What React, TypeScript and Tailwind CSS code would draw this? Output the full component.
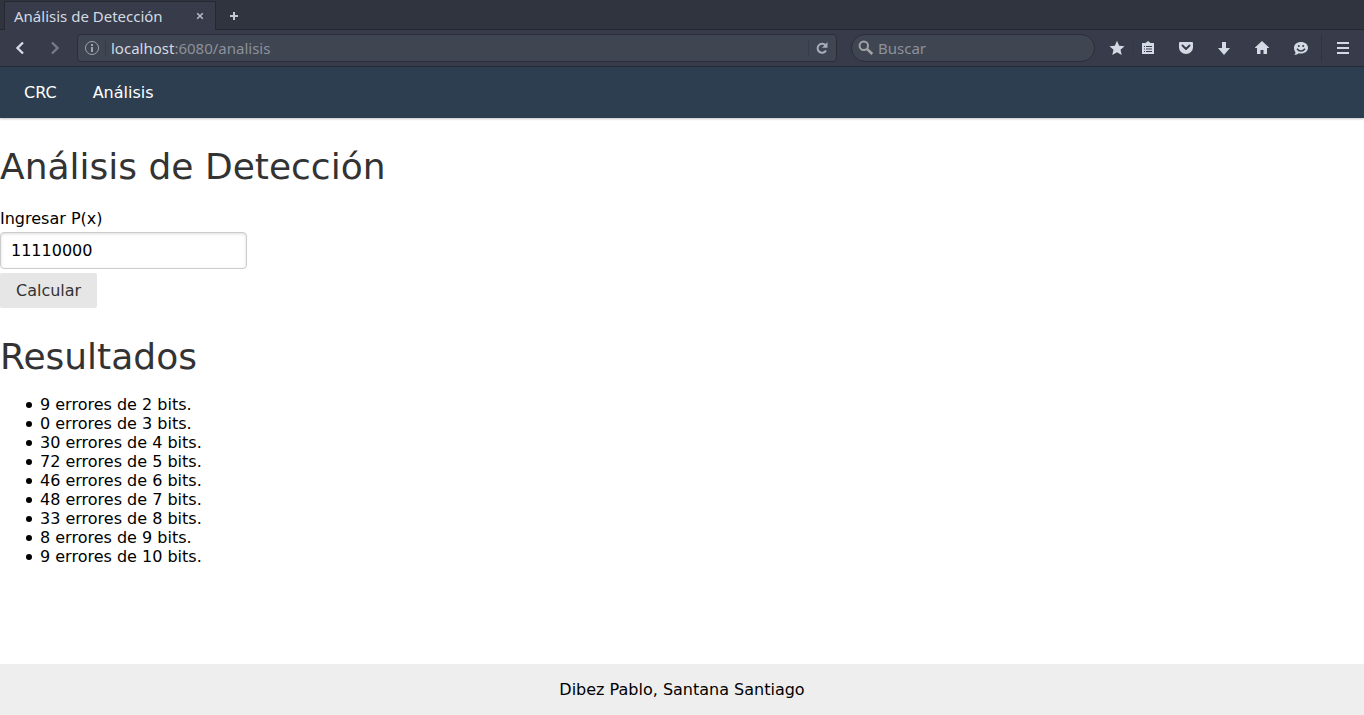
import { useState } from "react";
import type { ReactNode } from "react";

const results = [
  { count: 9, bits: 2 },
  { count: 0, bits: 3 },
  { count: 30, bits: 4 },
  { count: 72, bits: 5 },
  { count: 46, bits: 6 },
  { count: 48, bits: 7 },
  { count: 33, bits: 8 },
  { count: 8, bits: 9 },
  { count: 9, bits: 10 },
];

function ToolButton({ label, className, children }: { label: string; className: string; children: ReactNode }) {
  return (
    <button type="button" aria-label={label} className={`flex h-8 shrink-0 items-center justify-center text-[#d3dae3] ${className}`}>
      {children}
    </button>
  );
}

function Icon({ children }: { children: ReactNode }) {
  return (
    <svg width="16" height="16" viewBox="0 0 16 16" fill="currentColor" aria-hidden="true">
      {children}
    </svg>
  );
}

function TabStrip() {
  return (
    <div className="flex h-[30px] items-end border-b border-[#262932] bg-[#2f343f] pl-1 text-[#d3dae3]">
      <div className="-mb-px flex h-[29px] w-[212px] items-center justify-between border-x border-t border-[#262932] bg-[#383c4a] pr-[11px] pl-[9px]">
        <span className="text-[15px] leading-6 whitespace-nowrap">Análisis de Detección</span>
        <button type="button" aria-label="Cerrar pestaña">
          <svg width="8" height="8" viewBox="0 0 8 8" stroke="#b4bac5" strokeWidth="1.600" aria-hidden="true">
            <path d="M1.200 1.200l5.600 5.600M6.800 1.200l-5.600 5.600" />
          </svg>
        </button>
      </div>
      <button type="button" aria-label="Nueva pestaña" className="flex h-[26px] w-9 items-center justify-center">
        <svg width="8" height="8" viewBox="0 0 8 8" stroke="#c3c9d4" strokeWidth="2" aria-hidden="true">
          <path d="M4 0v8M0 4h8" />
        </svg>
      </button>
    </div>
  );
}

function Toolbar() {
  const [path, setPath] = useState(":6080/analisis");
  return (
    <div className="flex h-[37px] items-center border-b border-[#262932] bg-[#383c4a]">
      <ToolButton label="Atrás" className="w-[39px]">
        <Icon>
          <path d="M11 2.500L5.500 8l5.500 5.500" fill="none" stroke="currentColor" strokeWidth="2.400" />
        </Icon>
      </ToolButton>
      <ToolButton label="Adelante" className="w-8 opacity-40">
        <Icon>
          <path d="M5 2.500L10.500 8 5 13.500" fill="none" stroke="currentColor" strokeWidth="2.400" />
        </Icon>
      </ToolButton>
      <div className="ml-[6px] flex h-7 min-w-0 flex-1 items-center rounded-sm border border-[#2b2e39] bg-[#404552]">
        <button type="button" aria-label="Información del sitio" className="ml-[6px] text-[#9fa4ad]">
          <Icon>
            <circle cx="8" cy="8" r="6.500" fill="none" stroke="currentColor" />
            <path d="M7 7h2v5H7zM7 4h2v2H7z" />
          </Icon>
        </button>
        <span className="ml-[5px] h-4 w-px bg-[#383c4a]" />
        <label className="ml-[5px] flex h-6 min-w-0 flex-1 items-center text-[15px] leading-6">
          <span className="text-[#d3dae3]">localhost</span>
          <input
            aria-label="Dirección"
            value={path}
            onChange={(e) => setPath(e.target.value)}
            className="h-6 min-w-0 flex-1 bg-transparent leading-6 text-[#8c919b] outline-none"
          />
        </label>
        <span className="h-4 w-px bg-[#383c4a]" />
        <button type="button" aria-label="Recargar" className="flex w-[27px] justify-center pr-[2px] text-[#a4b0bb]">
          <svg width="14" height="14" viewBox="0 0 14 14" aria-hidden="true">
            <path d="M10.600 4.400A4.500 4.500 0 1 0 11 9.500" fill="none" stroke="currentColor" strokeWidth="2" />
            <path d="M12.500 1v5.800H7z" fill="currentColor" />
          </svg>
        </button>
      </div>
      <label className="ml-[14px] flex h-7 w-[244px] shrink-0 items-center gap-1 rounded-full border border-[#2b2e39] bg-[#404552] pr-4 pl-[6px]">
        <svg width="16" height="16" viewBox="0 0 16 16" fill="none" stroke="#a2a3a5" className="shrink-0" aria-hidden="true">
          <circle cx="5.800" cy="5.800" r="4.200" strokeWidth="2" />
          <path d="M9 9l5.300 5" strokeWidth="2.600" />
        </svg>
        <input
          aria-label="Buscar en la web"
          placeholder="Buscar"
          className="h-6 w-full min-w-0 bg-transparent text-[15px] leading-6 text-[#d3dae3] outline-none placeholder:text-[#8c919b]"
        />
      </label>
      <ToolButton label="Marcador" className="ml-[7px] w-[30px]">
        <Icon>
          <path d="M8 .8l2.200 4.900 5.300.5-4 3.500 1.200 5.200L8 12.200l-4.700 2.700 1.200-5.200-4-3.500 5.300-.5z" />
        </Icon>
      </ToolButton>
      <span className="h-5 w-px bg-[#343845]" />
      <ToolButton label="Lista de marcadores" className="w-[30px]">
        <Icon>
          <path fillRule="evenodd" d="M2 3h3.500L8 1l2.500 2H14v11H2zM4 6v1h1V6zm2 0v1h6V6zM4 8.500v1h1v-1zm2 0v1h6v-1zM4 11v1h1v-1zm2 0v1h6v-1z" />
        </Icon>
      </ToolButton>
      <ToolButton label="Guardar en Pocket" className="ml-1 w-[38px]">
        <Icon>
          <path d="M2 2h12a1 1 0 0 1 1 1v4.500a7 6.500 0 0 1-14 0V3a1 1 0 0 1 1-1z" />
          <path d="M4.500 5.500L8 9l3.500-3.500" fill="none" stroke="#383c4a" strokeWidth="1.900" strokeLinecap="round" strokeLinejoin="round" />
        </Icon>
      </ToolButton>
      <ToolButton label="Descargas" className="w-[38px]">
        <Icon>
          <path d="M6 2h4v6h4l-6 7-6-7h4z" />
        </Icon>
      </ToolButton>
      <ToolButton label="Inicio" className="w-[38px]">
        <Icon>
          <path d="M8 1l7 6.500V8h-2v6H9.500v-4h-3v4H3V8H1v-.500z" />
        </Icon>
      </ToolButton>
      <ToolButton label="Chat" className="w-10">
        <Icon>
          <path d="M8 2c4 0 7 2.400 7 5.800s-3 5.800-7 5.800c-.8 0-1.600-.1-2.300-.3C4.600 14.300 3.200 15 1.300 15c.8-.8 1.200-1.800 1.200-2.800C1.500 11.100 1 9.500 1 7.800 1 4.400 4 2 8 2z" />
          <circle cx="5.800" cy="6" r="1" fill="#383c4a" />
          <circle cx="10.200" cy="6" r="1" fill="#383c4a" />
          <path d="M4 8.800c2 2.900 6 2.900 8 0" fill="none" stroke="#383c4a" strokeWidth="1.500" />
        </Icon>
      </ToolButton>
      <span className="h-7 w-px bg-[#303440]" />
      <ToolButton label="Menú" className="w-[42px]">
        <Icon>
          <path d="M2 2h12v2H2zM2 7h12v2H2zM2 12h12v2H2z" />
        </Icon>
      </ToolButton>
    </div>
  );
}

export default function App() {
  const [value, setValue] = useState("11110000");
  return (
    <div className="flex min-h-screen flex-col bg-white font-['DejaVu_Sans',sans-serif] text-[16px] leading-[19px] text-black">
      <header className="font-['Noto_Sans',sans-serif]">
        <TabStrip />
        <Toolbar />
      </header>
      <nav className="flex h-[51px] items-center gap-9 bg-[#2d3e50] px-6 text-white shadow-[0_1px_2px_rgba(0,0,0,0.25)]">
        <a href="#crc">CRC</a>
        <a href="#analisis">Análisis</a>
      </nav>
      <main className="pt-7">
        <h1 className="text-[36px] leading-[42px] text-[#333333]">Análisis de Detección</h1>
        <form className="mt-[21px] flex flex-col items-start" onSubmit={(e) => e.preventDefault()}>
          <label htmlFor="px">Ingresar P(x)</label>
          <input
            id="px"
            value={value}
            onChange={(e) => setValue(e.target.value)}
            className="mt-1 h-[37px] w-[247px] rounded border border-[#cccccc] px-[10px] shadow-[inset_0_1px_3px_#dddddd]"
          />
          <button type="submit" className="mt-1 h-[35px] rounded-xs bg-[#e6e6e6] px-4 text-[#333333]">
            Calcular
          </button>
        </form>
        <h2 className="mt-7 text-[36px] leading-[42px] text-[#333333]">Resultados</h2>
        <ul className="mt-[17px] pl-[26px]">
          {results.map((r) => (
            <li key={r.bits} className="flex items-center gap-2 before:size-[6px] before:rounded-full before:bg-black before:content-['']">
              <span>
                {r.count} errores de {r.bits} bits.
              </span>
            </li>
          ))}
        </ul>
      </main>
      <footer className="mt-auto bg-[#eeeeee] py-4 text-center">Dibez Pablo, Santana Santiago</footer>
    </div>
  );
}
